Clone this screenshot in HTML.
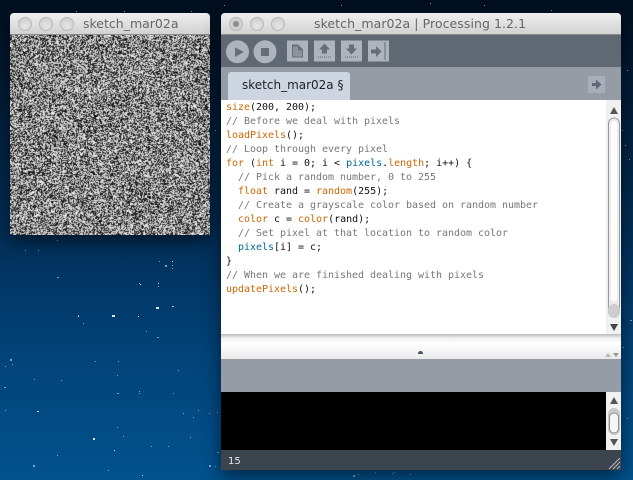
<!DOCTYPE html>
<html><head><meta charset="utf-8">
<style>
html,body{margin:0;padding:0}
body{width:633px;height:480px;overflow:hidden;position:relative;background:linear-gradient(180deg,#010f20 0,#021d38 100px,#02305a 240px,#02447a 360px,#01528e 480px);font-family:"DejaVu Sans","Liberation Sans",sans-serif}
.a{position:absolute}
.win{box-shadow:0 6px 18px rgba(0,0,0,.55)}
.tb{position:absolute;left:0;top:0;height:21px;background:linear-gradient(180deg,#efefef,#d2d2d2);border-radius:4px 4px 0 0;border-bottom:1px solid #8b8b8b}
.tt{position:absolute;top:3px;font-size:12.5px;line-height:16px;color:#666;white-space:pre}
.lt{position:absolute;top:4px;width:14px;height:14px;border-radius:50%;background:radial-gradient(circle at 50% 70%,#e6e6e6,#cacaca);border:1px solid #b8b8b8;box-sizing:border-box}
pre{margin:0;position:absolute;left:226px;top:101px;font:10px/14px "DejaVu Sans Mono","Liberation Mono",monospace;color:#111;letter-spacing:-.02px}
.o{color:#c60}.c{color:#777}.b{color:#069}
</style></head>
<body>
<svg class="a" style="left:0;top:0" width="633" height="480" fill="#9cc4e4">
<g opacity=".75">
<rect x="57" y="240" width="1" height="1"/><rect x="25" y="250" width="1" height="1"/><rect x="38" y="250" width="1" height="1"/><rect x="57" y="277" width="2" height="1"/><rect x="159" y="261" width="1" height="1"/><rect x="165" y="265" width="2" height="2"/><rect x="172" y="265" width="1" height="1"/><rect x="172" y="268" width="1" height="1"/><rect x="158" y="286" width="1" height="1"/><rect x="139" y="283" width="1" height="1"/><rect x="158" y="286" width="1" height="1"/><rect x="78" y="315" width="1" height="1"/><rect x="83" y="323" width="1" height="1"/><rect x="146" y="331" width="1" height="1"/><rect x="173" y="306" width="1" height="1"/><rect x="157" y="337" width="2" height="1"/><rect x="95" y="361" width="1" height="1"/><rect x="118" y="361" width="1" height="1"/><rect x="117" y="375" width="1" height="1"/><rect x="61" y="380" width="1" height="1"/><rect x="139" y="393" width="1" height="1"/><rect x="173" y="393" width="1" height="1"/><rect x="10" y="359" width="2" height="2"/><rect x="12" y="364" width="1" height="1"/><rect x="34" y="379" width="1" height="1"/><rect x="4" y="387" width="2" height="1"/><rect x="117" y="393" width="2" height="1"/><rect x="117" y="427" width="1" height="1"/><rect x="139" y="391" width="1" height="1"/><rect x="178" y="370" width="1" height="1"/><rect x="198" y="410" width="1" height="1"/><rect x="193" y="417" width="1" height="1"/><rect x="209" y="413" width="1" height="1"/><rect x="183" y="413" width="1" height="1"/><rect x="168" y="446" width="1" height="1"/><rect x="151" y="446" width="1" height="1"/><rect x="123" y="436" width="1" height="1"/><rect x="190" y="437" width="1" height="1"/><rect x="114" y="450" width="1" height="1"/><rect x="57" y="455" width="1" height="1"/><rect x="33" y="465" width="2" height="2"/><rect x="142" y="475" width="1" height="1"/><rect x="108" y="470" width="1" height="1"/><rect x="209" y="465" width="2" height="2"/><rect x="215" y="466" width="1" height="1"/><rect x="217" y="452" width="2" height="1"/>
<rect x="625" y="145" width="1" height="1"/><rect x="629" y="159" width="1" height="1"/><rect x="622" y="130" width="1" height="1"/><rect x="627" y="70" width="1" height="1"/><rect x="630" y="320" width="2" height="1"/><rect x="623" y="347" width="1" height="1"/><rect x="627" y="418" width="1" height="1"/>
<rect x="353" y="475" width="2" height="2"/><rect x="358" y="474" width="1" height="1"/><rect x="375" y="472" width="1" height="1"/><rect x="392" y="473" width="1" height="1"/><rect x="394" y="472" width="1" height="1"/><rect x="410" y="474" width="1" height="1"/><rect x="224" y="5" width="1" height="1"/><rect x="341" y="5" width="1" height="1"/><rect x="430" y="3" width="1" height="1"/><rect x="484" y="5" width="1" height="1"/><rect x="551" y="10" width="1" height="1"/><rect x="76" y="11" width="1" height="1"/><rect x="124" y="11" width="1" height="1"/><rect x="191" y="11" width="1" height="1"/><rect x="215" y="130" width="1" height="1"/><rect x="5" y="410" width="1" height="1"/><rect x="5" y="366" width="1" height="1"/><rect x="217" y="412" width="1" height="1"/>
</g>
<g fill="#d5e6f2">
<rect x="112" y="315" width="3" height="2"/><rect x="156" y="307" width="3" height="2"/><rect x="37" y="411" width="2" height="1"/><rect x="93" y="438" width="2" height="2"/><rect x="172" y="306" width="1" height="1"/><rect x="138" y="316" width="1" height="1"/><rect x="78" y="316" width="1" height="1"/><rect x="158" y="283" width="1" height="1"/><rect x="172" y="261" width="1" height="1"/><rect x="140" y="284" width="1" height="1"/><rect x="114" y="450" width="1" height="1"/><rect x="142" y="475" width="1" height="1"/>
</g>
</svg>

<!-- sketch window -->
<div class="a win" style="left:10px;top:13px;width:200px;height:222px;background:#888;border-radius:4px 4px 0 0">
<div class="tb" style="width:200px"></div>
<div class="lt" style="left:8px"></div><div class="lt" style="left:29px"></div><div class="lt" style="left:50px"></div>
<div class="tt" style="left:73px">sketch_mar02a</div>
<canvas id="n" width="200" height="200" class="a" style="left:0;top:22px"></canvas>
</div>

<!-- main window -->
<div class="a win" style="left:221px;top:13px;width:400px;height:457px;background:#fff;border-radius:4px 4px 0 0">
<div class="tb" style="width:400px"></div>
<div class="lt" style="left:8px;background:radial-gradient(circle,#8d8d8d 0 2.5px,#d0d0d0 3.5px)"></div><div class="lt" style="left:29px"></div><div class="lt" style="left:50px"></div>
<div class="tt" style="left:93px;letter-spacing:.06px">sketch_mar02a | Processing 1.2.1</div>
<div class="a" style="left:0;top:22px;width:400px;height:32px;background:#5f6873"></div>
<div class="a" style="left:0;top:54px;width:400px;height:33px;background:#959ca6"></div>
<div class="a" style="left:7px;top:59px;width:122px;height:28px;background:#cdd6e0;border-radius:3px 3px 0 0"></div>
<div class="a" style="left:21px;top:64px;font-size:12px;line-height:16px;color:#222;white-space:pre">sketch_mar02a §</div>
<svg class="a" style="left:0;top:22px" width="400" height="33">
<circle cx="16.500" cy="16.700" r="11.500" fill="#adb4bc"/><path d="M14 12.500L23 17 14 22Z" fill="#666e78"/>
<circle cx="44" cy="16.700" r="11.500" fill="#adb4bc"/><rect x="40" y="13" width="8" height="8" fill="#666e78"/>
<g transform="translate(-1 .5)">
<rect x="67" y="5" width="21" height="21" fill="#adb4bc"/><path d="M72 9h6l5 5v8H72Z" fill="#666e78"/><path d="M73 11h5v4h4v6h-9Z" fill="#adb4bc" opacity=".55"/>
<rect x="94" y="5" width="21" height="21" fill="#adb4bc"/><path d="M104.500 8l5.500 6h-3v4h-5v-4h-3Z" fill="#666e78"/><path d="M98 21.500h13" stroke="#666e78" stroke-dasharray="1 1"/>
<rect x="121" y="5" width="21" height="21" fill="#adb4bc"/><path d="M131.500 19l5.500-6h-3V9h-5v4h-3Z" fill="#666e78"/><path d="M125 21.500h13" stroke="#666e78" stroke-dasharray="1 1"/>
<rect x="148" y="5" width="21" height="21" fill="#adb4bc"/><path d="M151 14h5v-3.500l5.500 5.500-5.500 5.500V18h-5Z" fill="#666e78"/><path d="M165 7v18" stroke="#666e78" stroke-width="2" stroke-dasharray="1 1"/>
</g>
</svg>
<div class="a" style="left:367px;top:63px;width:17px;height:17px;background:#a7aeb7"></div>
<svg class="a" style="left:367px;top:63px" width="17" height="17"><path d="M4 7h4V3.500L13.500 8.500 8 13.500V10H4Z" fill="#5f6873"/></svg>

<!-- scrollbar editor -->
<div class="a" style="left:385px;top:87px;width:15px;height:234px;background:#f1f1f1"></div>
<svg class="a" style="left:385px;top:87px" width="15" height="234">
<path d="M4 14l4-7 4 7Z" fill="#555"/>
<rect x="2.500" y="18" width="11" height="198" rx="5.500" fill="#ececec" stroke="#9a9a9a"/>
<rect x="5" y="21" width="6" height="180" rx="3" fill="#fff"/>
<rect x="2" y="204" width="12" height="14" rx="6" fill="#cdcdcd"/>
<path d="M4 224l4 7 4-7Z" fill="#444"/>
</svg>
<!-- splitter -->
<div class="a" style="left:0;top:321px;width:400px;height:25px;background:linear-gradient(180deg,#b9b9b9 0,#f0f0f0 4px,#fff 9px,#f3f3f3 18px,#e9e9e9 25px)"></div>
<div class="a" style="left:197px;top:338px;width:5px;height:3px;background:#4c5560;border-radius:3px 3px 0 0"></div>
<svg class="a" style="left:383px;top:337px" width="17" height="9"><path d="M1 7l3-4 3 4Z" fill="#bbb"/><path d="M9 3l3 4 3-4Z" fill="#999"/></svg>
<!-- message area -->
<div class="a" style="left:0;top:346px;width:400px;height:33px;background:#959ca6"></div>
<div class="a" style="left:0;top:379px;width:385px;height:58px;background:#000"></div>
<div class="a" style="left:385px;top:379px;width:15px;height:58px;background:#f1f1f1"></div>
<svg class="a" style="left:385px;top:379px" width="15" height="58">
<path d="M4 12l4-7 4 7Z" fill="#555"/>
<rect x="2" y="16" width="12" height="27" rx="6" fill="#c9c9c9"/><rect x="3.500" y="21" width="9" height="20" rx="4.500" fill="#f6f6f6" stroke="#8e8e8e"/>
<path d="M4 47l4 7 4-7Z" fill="#555"/>
</svg>
<div class="a" style="left:0;top:437px;width:400px;height:20px;background:#3c444e"></div>
<div class="a" style="left:7px;top:442px;font-size:10px;line-height:14px;color:#e8e8e8">15</div>
<svg class="a" style="left:387px;top:443px" width="13" height="14"><path d="M1 13L12 2M5 13l7-7M9 13l3-3" stroke="#b4b8bd"/></svg>
</div>

<pre><span class="o">size</span>(200, 200);
<span class="c">// Before we deal with pixels</span>
<span class="o">loadPixels</span>();
<span class="c">// Loop through every pixel</span>
<span class="o">for</span> (<span class="o">int</span> i = 0; i &lt; <span class="b">pixels</span>.<span class="o">length</span>; i++) {
  <span class="c">// Pick a random number, 0 to 255</span>
  <span class="o">float</span> rand = <span class="o">random</span>(255);
  <span class="c">// Create a grayscale color based on random number</span>
  <span class="o">color</span> c = <span class="o">color</span>(rand);
  <span class="c">// Set pixel at that location to random color</span>
  <span class="b">pixels</span>[i] = c;
}
<span class="c">// When we are finished dealing with pixels</span>
<span class="o">updatePixels</span>();</pre>

<script>
var x=document.getElementById('n').getContext('2d'),d=x.createImageData(200,200),s=12345;
function r(){s=(s*1664525+1013904223)>>>0;return (s>>>16)&255}
for(var i=0;i<40000;i++){var q=r(),w=r(),v=q<112?Math.round(w*.3):150+Math.round(w*.41);d.data[i*4]=d.data[i*4+1]=d.data[i*4+2]=v;d.data[i*4+3]=255}
x.putImageData(d,0,0);
</script>
</body></html>
